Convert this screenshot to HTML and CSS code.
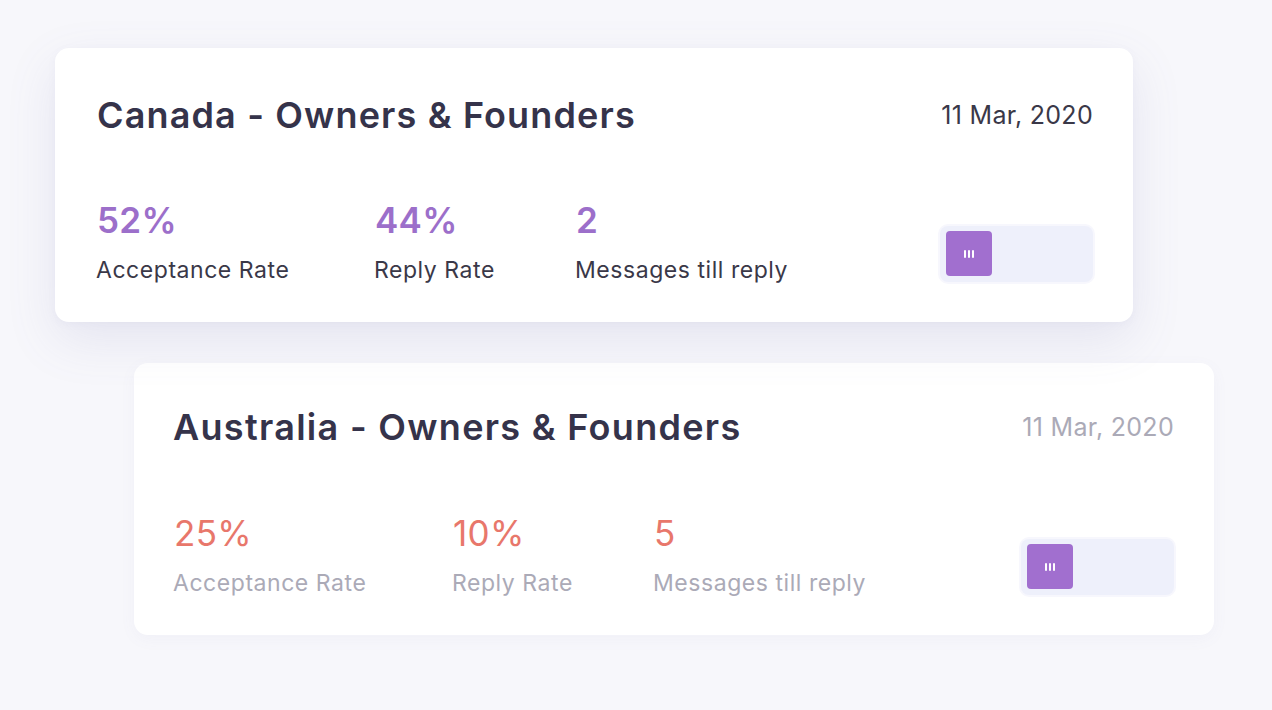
FILE: index.html
```html
<!DOCTYPE html>
<html>
<head>
<meta charset="utf-8">
<link rel="stylesheet" href="styles.css">
</head>
<body>
<div class="stack">
  <div class="card card-front">
    <div class="card-head">
      <div class="title">Canada - Owners &amp; Founders</div>
      <div class="date">11 Mar, 2020</div>
    </div>
    <div class="card-body">
      <div class="stats">
        <div class="stat s1"><div class="num purple">52%</div><div class="label">Acceptance Rate</div></div>
        <div class="stat s2"><div class="num purple">44%</div><div class="label">Reply Rate</div></div>
        <div class="stat"><div class="num purple">2</div><div class="label">Messages till reply</div></div>
      </div>
      <div class="toggle"><div class="knob"><span></span><span></span><span></span></div></div>
    </div>
  </div>
  <div class="card card-back">
    <div class="card-head">
      <div class="title">Australia - Owners &amp; Founders</div>
      <div class="date muted">11 Mar, 2020</div>
    </div>
    <div class="card-body">
      <div class="stats">
        <div class="stat s1"><div class="num red">25%</div><div class="label muted">Acceptance Rate</div></div>
        <div class="stat s2"><div class="num red">10%</div><div class="label muted">Reply Rate</div></div>
        <div class="stat"><div class="num red">5</div><div class="label muted">Messages till reply</div></div>
      </div>
      <div class="toggle"><div class="knob"><span></span><span></span><span></span></div></div>
    </div>
  </div>
</div>
</body>
</html>
```
FILE: styles.css
```css
html, body { margin: 0; padding: 0; }
body {
  width: 1272px; height: 710px; overflow: hidden;
  background: #f7f7fb;
  font-family: Inter, "Open Sans", sans-serif;
  color: #35334a;
}
.stack { display: flex; flex-direction: column; padding-top: 48px; gap: 41px; }
.card {
  background: #fff;
  border-radius: 14px;
  box-sizing: border-box;
  height: 274px;
  padding: 45px 40px 38px 42px;
  display: flex; flex-direction: column;
}
.card-front {
  margin-left: 55px; width: 1078px;
  box-shadow: 0 18px 50px rgba(110, 110, 170, 0.13), 0 2px 8px rgba(110,110,170,0.05);
  position: relative; z-index: 2;
}
.card-back {
  margin-left: 134px; width: 1080px; height: 272px;
  padding: 42px 40px 38px 40px;
  box-shadow: 0 4px 16px rgba(110, 110, 170, 0.05);
}
.card-head { display: flex; justify-content: space-between; align-items: center; }
.title { font-size: 36px; font-weight: 600; line-height: 44px; letter-spacing: 1.15px; color: #35334a; }
.card-back .title { letter-spacing: 1.3px; margin-left: -1px; }
.date { font-size: 25px; line-height: 30px; letter-spacing: 0.3px; color: #3a3848; }
.card-body { margin-top: auto; display: flex; justify-content: space-between; align-items: flex-end; }
.stats { display: flex; }
.stat { display: flex; flex-direction: column; }
.s1 { width: 278px; }
.s2 { width: 201px; }
.card-back .s1 { width: 279px; }
.num { font-size: 35px; font-weight: 600; line-height: 40px; letter-spacing: 0.3px; }
.card-back .num { font-weight: 400; }
.purple { color: #9c6fca; }
.red { color: #e8776b; }
.label { font-size: 23px; line-height: 28px; margin-top: 16px; letter-spacing: 0.55px; color: #3a3848; margin-left: -1px; }
.muted { color: #abaab7; }
.toggle {
  width: 153px; height: 56px; box-sizing: border-box;
  background: #eef0fb; border-radius: 8px;
  padding: 5px 6px; margin-bottom: 2px;
  box-shadow: 0 0 0 2px #f7f7fd;
}
.knob {
  width: 46px; height: 45px; background: #a16fcf; border-radius: 4px;
  display: flex; justify-content: center; align-items: center; gap: 2px;
}
.knob span { width: 2px; height: 8px; background: #fff; border-radius: 1px; }
```
